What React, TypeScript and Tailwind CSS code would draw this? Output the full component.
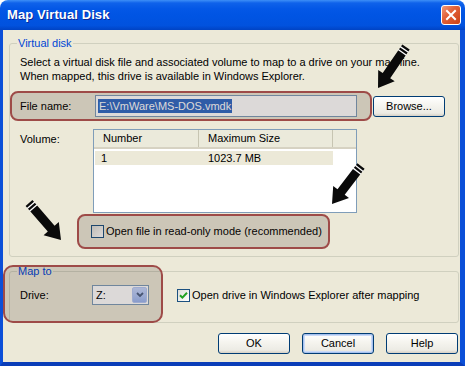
import React from "react";

type P = [number, number];

function Arrow({ t, h }: { t: P; h: P }) {
  const [x1, y1] = t;
  const [x2, y2] = h;
  const dx = x2 - x1;
  const dy = y2 - y1;
  const L = Math.hypot(dx, dy);
  const ux = dx / L;
  const uy = dy / L;
  const nx = -uy;
  const ny = ux;
  const sw = 4.5;
  const hw = 10;
  const hl = 15;
  const bx = x2 - ux * hl;
  const by = y2 - uy * hl;
  const p = (x: number, y: number) => `${x.toFixed(1)},${y.toFixed(1)}`;
  const pts = [
    p(x1 + nx * sw, y1 + ny * sw),
    p(bx + nx * sw, by + ny * sw),
    p(bx + nx * hw, by + ny * hw),
    p(x2, y2),
    p(bx - nx * hw, by - ny * hw),
    p(bx - nx * sw, by - ny * sw),
    p(x1 - nx * sw, y1 - ny * sw),
  ].join(" ");
  const stripe = (s: number) => {
    const cx = x1 + ux * s;
    const cy = y1 + uy * s;
    return (
      <line
        x1={cx + nx * (sw + 0.5)}
        y1={cy + ny * (sw + 0.5)}
        x2={cx - nx * (sw + 0.5)}
        y2={cy - ny * (sw + 0.5)}
        stroke="#ffffff"
        strokeWidth={1.3}
      />
    );
  };
  return (
    <g>
      <polygon points={pts} fill="#0a0a0a" />
      {stripe(3)}
      {stripe(6.5)}
    </g>
  );
}

function XPButton({ label, focused }: { label: string; focused?: boolean }) {
  return (
    <div
      className={
        "w-[72px] h-[21px] rounded-[3px] border border-[#003C74] flex items-center justify-center text-[11px] text-black bg-[linear-gradient(180deg,#FFFFFF_0%,#F6F5F0_40%,#ECEBE4_85%,#D6D0C5_100%)] " +
        (focused ? "shadow-[inset_0_0_0_1px_#A6C1EE,inset_0_0_0_2px_#CADAF7]" : "")
      }
    >
      {label}
    </div>
  );
}

function CheckBox({ checked }: { checked?: boolean }) {
  return (
    <div className="w-[13px] h-[13px] border border-[#1C5180] bg-[linear-gradient(135deg,#DCDCD7_0%,#F2F2EE_60%,#FFFFFF_100%)] flex items-center justify-center shrink-0">
      {checked && (
        <svg width="9" height="9" viewBox="0 0 9 9">
          <path d="M1 4.2 L3.4 6.6 L8 1.8" stroke="#21A121" strokeWidth="2" fill="none" />
        </svg>
      )}
    </div>
  );
}

export default function App() {
  return (
    <div className="w-[470px] h-[370px] bg-white font-['Liberation_Sans',Arial,sans-serif] text-[11px] text-black">
      <div className="relative w-[465px] h-[366px] flex flex-col">
        {/* Title bar */}
        <div className="h-[30px] shrink-0 rounded-t-[8px] flex items-center justify-between pl-[7px] pr-[4px] bg-[linear-gradient(180deg,#3D8FF7_0%,#0F62EA_10%,#0357E6_30%,#0054E3_55%,#0152DE_85%,#0043C4_100%)]">
          <span className="text-white font-bold text-[13px] [text-shadow:1px_1px_0_#0B2A9A] tracking-[0.1px]">
            Map Virtual Disk
          </span>
          <div className="w-[20px] h-[20px] rounded-[3px] border border-white bg-[linear-gradient(135deg,#F19A7A_0%,#E2623A_40%,#CC4114_100%)] flex items-center justify-center">
            <svg width="12" height="12" viewBox="0 0 12 12">
              <path d="M2 2 L10 10 M10 2 L2 10" stroke="#ffffff" strokeWidth="2" strokeLinecap="square" />
            </svg>
          </div>
        </div>

        {/* Body */}
        <div className="flex-1 bg-[#ECE9D8] border-l-[3px] border-r-[5px] border-b-[4px] border-l-[#0B4FD8] border-r-[#0B4FD8] border-b-[#0A3DB8] pl-[6px] pr-[1px] pt-[7px]">
          <fieldset className="border border-[#D0D0BF] rounded-[3px] pb-[7px]">
            <legend className="ml-[7px] px-[1px] leading-[13px] text-[#0046D5]">Virtual disk</legend>
            <div className="mt-[5px] pl-[10px] leading-[14px]">
              <div>Select a virtual disk file and associated volume to map to a drive on your machine.</div>
              <div>When mapped, this drive is available in Windows Explorer.</div>
            </div>
            <div className="mt-[8px] h-[30px] flex items-center pl-[10px]">
              <div className="w-[75px]">File name:</div>
              <div className="w-[262px] h-[22px] border border-[#7F9DB9] bg-white flex items-center pl-[2px]">
                <span className="bg-[#316AC5] text-white px-[1px] leading-[14px]">E:\VmWare\MS-DOS.vmdk</span>
              </div>
              <div className="ml-[16px]">
                <XPButton label="Browse..." />
              </div>
            </div>
            <div className="mt-[8px] flex items-start pl-[10px]">
              <div className="w-[73px] pt-[2px]">Volume:</div>
              <div className="w-[264px] h-[84px] border border-[#7F9DB9] bg-white">
                <div className="flex h-[19px] bg-[#EBEADB] border-b-[2px] border-[#D6D2C2]">
                  <div className="w-[105px] pl-[9px] flex items-center border-r border-[#C7C5B2]">Number</div>
                  <div className="w-[134px] pl-[9px] flex items-center border-r border-[#C7C5B2]">Maximum Size</div>
                </div>
                <div className="mt-[2px] ml-[1px] w-[238px] h-[14px] flex items-center bg-[#ECE9D8]">
                  <div className="w-[104px] pl-[6px]">1</div>
                  <div className="pl-[9px]">1023.7 MB</div>
                </div>
              </div>
            </div>
            <div className="mt-[1px] h-[35px] flex items-center pl-[81px] gap-[2px]">
              <CheckBox />
              <span>Open file in read-only mode (recommended)</span>
            </div>
          </fieldset>

          <fieldset className="mt-[8px] border border-[#D0D0BF] rounded-[3px] pb-[17px]">
            <legend className="ml-[7px] px-[1px] leading-[13px] text-[#0046D5]">Map to</legend>
            <div className="mt-[7px] h-[20px] flex items-center pl-[10px]">
              <div className="w-[72px]">Drive:</div>
              <div className="w-[57px] h-[20px] border border-[#7F9DB9] bg-white flex">
                <div className="flex-1 pl-[3px] flex items-center">Z:</div>
                <div className="w-[15px] m-[1px] rounded-[2px] border border-[#B6C9F5] bg-[linear-gradient(180deg,#C6D6FC_0%,#B0C6F7_60%,#9CB6F0_100%)] flex items-center justify-center">
                  <svg width="8" height="6" viewBox="0 0 8 6">
                    <path d="M1 1 L4 4 L7 1" stroke="#4D6185" strokeWidth="1.8" fill="none" />
                  </svg>
                </div>
              </div>
              <div className="ml-[28px] flex items-center gap-[2px]">
                <CheckBox checked />
                <span>Open drive in Windows Explorer after mapping</span>
              </div>
            </div>
          </fieldset>

          <div className="mt-[10px] flex justify-end gap-[12px] pr-[1px]">
            <XPButton label="OK" />
            <XPButton label="Cancel" focused />
            <XPButton label="Help" />
          </div>
        </div>

        {/* Annotation highlights */}
        <div className="absolute left-[10px] top-[91px] w-[362px] h-[30px] rounded-[8px] border-2 border-[#9E4B48] bg-[rgba(40,20,10,0.16)] pointer-events-none" />
        <div className="absolute left-[77px] top-[214px] w-[253px] h-[35px] rounded-[8px] border-2 border-[#9E4B48] bg-[rgba(40,20,10,0.16)] pointer-events-none" />
        <div className="absolute left-[3px] top-[265px] w-[160px] h-[58px] rounded-[10px] border-2 border-[#9E4B48] bg-[rgba(40,20,10,0.16)] pointer-events-none" />

        {/* Annotation arrows */}
        <svg className="absolute left-0 top-0 pointer-events-none" width="465" height="366">
          <Arrow t={[406, 47]} h={[378, 88]} />
          <Arrow t={[361, 166]} h={[332, 204]} />
          <Arrow t={[29, 203]} h={[61, 240]} />
        </svg>
      </div>
    </div>
  );
}
